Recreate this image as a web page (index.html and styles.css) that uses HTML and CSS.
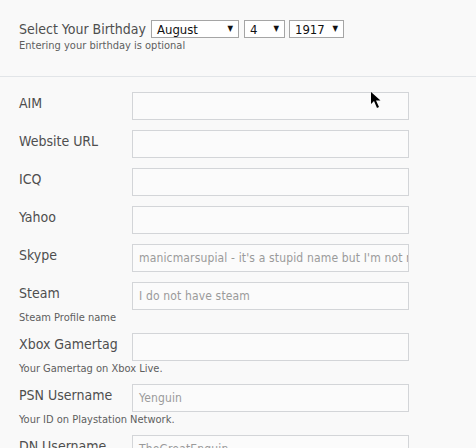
FILE: index.html
```html
<!DOCTYPE html>
<html>
<head>
<meta charset="utf-8">
<link rel="stylesheet" href="styles.css">
</head>
<body>
<div class="page">
  <section class="birthday">
    <div class="bday-line">
      <span class="bday-label">Select Your Birthday</span>
      <span class="sel sel-month">August<span class="arrow">▼</span></span>
      <span class="sel sel-day">4<span class="arrow">▼</span></span>
      <span class="sel sel-year">1917<span class="arrow">▼</span></span>
    </div>
    <div class="bday-hint">Entering your birthday is optional</div>
  </section>
  <form class="fields">
    <div class="row"><label class="lbl">AIM</label><div class="inp"></div></div>
    <div class="row"><label class="lbl">Website URL</label><div class="inp"></div></div>
    <div class="row"><label class="lbl">ICQ</label><div class="inp"></div></div>
    <div class="row"><label class="lbl">Yahoo</label><div class="inp"></div></div>
    <div class="row"><label class="lbl">Skype</label><div class="inp">manicmarsupial - it's a stupid name but I'm not really bothered</div></div>
    <div class="row"><label class="lbl">Steam</label><div class="inp">I do not have steam</div><div class="hint">Steam Profile name</div></div>
    <div class="row"><label class="lbl">Xbox Gamertag</label><div class="inp"></div><div class="hint">Your Gamertag on Xbox Live.</div></div>
    <div class="row"><label class="lbl">PSN Username</label><div class="inp">Yenguin</div><div class="hint">Your ID on Playstation Network.</div></div>
    <div class="row"><label class="lbl">DN Username</label><div class="inp">TheGreatEnguin</div></div>
  </form>
  <svg class="cursor" width="11" height="17" viewBox="0 0 11 17"><path d="M0 0 L0 12 L3 9 L6 16 L8 15 L5 8.5 L9.5 8.5 Z" fill="#000"/></svg>
</div>
</body>
</html>
```
FILE: styles.css
```css
html, body {
  margin: 0;
  padding: 0;
  background: #f9f9f9;
  height: 100%;
  overflow: hidden;
}
.page {
  position: relative;
  font-family: "DejaVu Sans Condensed", "DejaVu Sans", sans-serif;
  color: #505050;
}
.birthday {
  padding: 20px 0 0 19px;
  height: 56px;
  border-bottom: 1px solid #e2e5e8;
}
.bday-line {
  display: flex;
  align-items: center;
  height: 18px;
}
.bday-label {
  font-size: 14px;
  margin-right: 5px;
  color: #4e4e4e;
}
.sel {
  position: relative;
  display: flex;
  align-items: center;
  box-sizing: border-box;
  height: 18px;
  border: 1px solid #a5a5a5;
  background: #fff;
  color: #111;
  font-size: 13px;
  padding-left: 5px;
}
.sel .arrow {
  position: absolute;
  right: 5px;
  top: 3px;
  font-size: 8px;
  color: #111;
}
.sel-month { width: 88px; margin-right: 5px; }
.sel-day { width: 41px; margin-right: 4px; }
.sel-year { width: 55px; }
.bday-hint {
  font-size: 11px;
  margin-top: 1px;
  color: #5e5e5e;
}
.fields {
  padding: 15px 0 0 19px;
  margin: 0;
}
.row {
  display: grid;
  grid-template-columns: 113px 277px;
  margin-bottom: 10px;
}
.lbl {
  font-size: 14px;
  padding-top: 3px;
  color: #4e4e4e;
  white-space: nowrap;
}
.inp {
  box-sizing: border-box;
  height: 28px;
  border: 1px solid #d3d5d8;
  background: #fbfbfb;
  font-size: 12px;
  letter-spacing: 0.15px;
  color: #9a9a9a;
  padding: 0 6px;
  line-height: 26px;
  white-space: nowrap;
  overflow: hidden;
}
.hint {
  grid-column: 1 / 3;
  font-size: 11px;
  line-height: 13px;
  padding-top: 1px;
  height: 12px;
  color: #5e5e5e;
}
.cursor {
  position: absolute;
  left: 371px;
  top: 92px;
}
```
